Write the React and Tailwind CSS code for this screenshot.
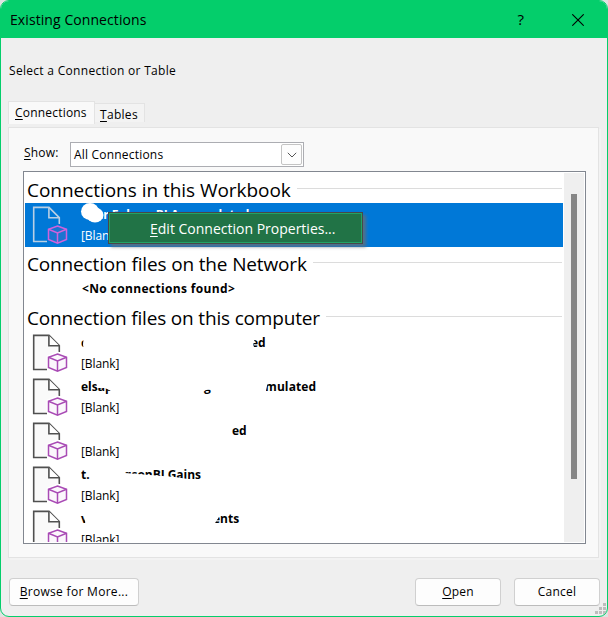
import React from "react";

function FileCube({ selected }) {
  const doc = selected ? "#b9cfe4" : "#505050";
  const cube = selected ? "#d062dc" : "#a94bb5";
  return (
    <svg className="block h-[38px] w-[36px] shrink-0" viewBox="0 0 36 38" fill="none">
      <path
        d="M15 35.5H1.7V1.4H17L27.3 11.7V18"
        stroke={doc}
        strokeWidth="1.6"
        fill={selected ? "none" : "#fafafa"}
      />
      <path d="M16.9 1.5V11.7H27.3" stroke={doc} strokeWidth="1.6" fill={selected ? "none" : "#fff"} />
      <path
        d="M25.5 19.3L34.5 23V33.2L25.5 37L16.3 33.2V23Z"
        stroke={selected ? "#0078d7" : "#fff"}
        strokeWidth="3.4"
        fill={selected ? "#0078d7" : "#fff"}
      />
      <path
        d="M25.5 20L34.5 23.3V33.5L25.5 37.2L16.5 33.5V23.3Z"
        stroke={cube}
        strokeWidth="1.5"
        fill={selected ? "#1b74d0" : "#fbf7fc"}
      />
      <path d="M16.5 23.3L25.5 27L34.5 23.3M25.5 27V37" stroke={cube} strokeWidth="1.5" />
    </svg>
  );
}

function Heading({ children, tracking }) {
  return (
    <div className="flex h-[30px] shrink-0 items-center pl-[2px] pr-[1px]">
      <span className={"whitespace-nowrap pt-[3px] text-[19px] leading-[30px] " + tracking}>{children}</span>
      <span className="ml-[6px] h-px flex-1 bg-[#dcdcdc]" />
    </div>
  );
}

function Row({ selected, title, mask }) {
  return (
    <div
      className={
        "relative flex h-[44px] shrink-0 pl-[7px] pt-[3px] " +
        (selected ? "bg-[#0078d7] text-white" : "")
      }
    >
      <FileCube selected={selected} />
      <div className="ml-[13px] flex flex-col pt-px text-[12px]">
        <div className="flex h-[16px] items-center whitespace-nowrap font-bold leading-[16px]">{title}</div>
        <div className="mt-[5px] h-[16px] leading-[16px] tracking-[-0.1px]">[Blank]</div>
      </div>
      <svg className="absolute left-0 top-0 h-[44px] w-[300px]" viewBox="0 0 300 44" fill="#fff">
        {mask}
      </svg>
    </div>
  );
}

function Button({ children, width }) {
  return (
    <button
      className={
        "flex h-[28px] items-center justify-center rounded-[4px] border border-[#d0d0d0] border-b-[#bcbcbc] bg-[#fdfdfd] text-[12px] " +
        width
      }
    >
      <span>{children}</span>
    </button>
  );
}

export default function App() {
  return (
    <div className="h-[617px] w-[608px] bg-[#dfe3e1]">
      <div className="relative flex h-[617px] w-[608px] flex-col overflow-hidden rounded-[9px] border border-[#04ce6b] bg-[#efefef] font-['Open_Sans','Noto_Sans',sans-serif] text-black">
        <header className="flex h-[37px] shrink-0 items-center bg-[#04ce6b] pl-[9px] pr-[23px]">
          <h1 className="text-[14px] leading-[20px] tracking-[0.08px]">Existing Connections</h1>
          <span className="ml-auto text-[15px]">?</span>
          <svg className="ml-[48px] h-[12px] w-[12px]" viewBox="0 0 12 12" stroke="#000" strokeWidth="1.1">
            <path d="M.3.3L11.7 11.7M11.7.3L.3 11.7" />
          </svg>
        </header>

        <p className="mt-[25px] h-[16px] shrink-0 pl-[8px] text-[12px] leading-[16px] tracking-[0.3px]">
          Select a Connection or Table
        </p>

        <div className="mt-[22px] flex h-[26px] shrink-0 items-start pl-[7px] text-[12px] tracking-[0.2px]">
          <div className="h-[23px] w-[87px] border border-b-0 border-[#e3e3e3] bg-[#f9f9f9] pl-[6px] leading-[22px]">
            <span className="underline underline-offset-2">C</span>onnections
          </div>
          <div className="mt-[2px] h-[19px] w-[50px] border border-b-0 border-l-0 border-[#e3e3e3] bg-[#f3f3f3] pl-[5px] leading-[22px] tracking-[0.3px]">
            <span className="underline underline-offset-2">T</span>ables
          </div>
        </div>

        <main className="ml-[7px] flex h-[431px] w-[591px] shrink-0 flex-col border border-[#e3e3e3] bg-[#f9f9f9] pl-[14px] pt-[14px] shadow-[2px_2px_0_#f3f3f3]">
          <div className="flex h-[25px] items-start text-[12px] tracking-[0.2px]">
            <span className="w-[47px] pl-px pt-[2px] leading-[18px]">
              <span className="underline underline-offset-2">S</span>how:
            </span>
            <div className="flex h-[25px] w-[234px] items-center border border-[#acadb2] bg-white pl-[3px] pr-[1px]">
              <span className="leading-[16px]">All Connections</span>
              <div className="ml-auto flex h-[21px] w-[21px] items-center justify-center rounded-[2px] border border-[#c4c4c4] bg-[#fdfdfd]">
                <svg className="h-[6px] w-[10px]" viewBox="0 0 10 6" fill="none" stroke="#555">
                  <path d="M.8.8L5 5L9.2.8" />
                </svg>
              </div>
            </div>
          </div>

          <div className="mt-[4px] flex h-[373px] w-[563px] border border-[#828790] bg-white p-[1px]">
            <div className="relative flex h-[369px] w-[538px] flex-col">
              <div className="flex h-[369px] flex-col overflow-hidden">
                <Heading tracking="tracking-[-0.04px]">Connections in this Workbook</Heading>
                <Row
                  selected
                  title={<span className="ml-[15px] tracking-[-0.05px]">ar Enkom BI Accumulated</span>}
                  mask={
                    <>
                      <ellipse cx="65" cy="8.5" rx="9" ry="8.5" />
                      <ellipse cx="70" cy="12" rx="8.5" ry="7.5" />
                    </>
                  }
                />
                <Heading tracking="tracking-[-0.15px]">Connection files on the Network</Heading>
                <div className="h-[24px] shrink-0 pl-[57px] pt-[4px] text-[12px] font-bold leading-[16px] tracking-[0.36px]">
                  &lt;No connections found&gt;
                </div>
                <Heading tracking="tracking-[-0.17px]">Connection files on this computer</Heading>
                <Row
                  title={
                    <>
                      <span className="w-[170px]">c</span>
                      <span>ed</span>
                    </>
                  }
                  mask={<path d="M59 2H229V9L230 11L228 13L230 19H59L58 14Z" />}
                />
                <Row
                  title={
                    <>
                      <span className="w-[123px]">elsap</span>
                      <span className="w-[61px]">g</span>
                      <span className="tracking-[0.1px]">mulated</span>
                    </>
                  }
                  mask={<path d="M71 2H244L240 20H187V14L176 16V23H92V16H86L80 13H72Z" />}
                />
                <Row title={<span className="ml-[151px]">ed</span>} />
                <Row
                  title={
                    <>
                      <span className="w-[28px]">t.</span>
                      <span className="tracking-[-0.05px]">andsonBI Gains</span>
                    </>
                  }
                  mask={
                    <>
                      <path d="M66 2H100V10L125 12L150 14L163 16V20H66Z" />
                      <path d="M101 2H126V9H101Z" />
                    </>
                  }
                />
                <Row
                  title={
                    <>
                      <span className="w-[132px]">v</span>
                      <span>ents</span>
                    </>
                  }
                  mask={<path d="M58 2H194V10L190 16V20H61L60 14Z" />}
                />
              </div>
              <div className="absolute left-[83px] top-[39px] flex h-[32px] w-[255px] border border-[#484848] bg-[#21a366] p-px shadow-[3px_3px_3px_rgba(110,110,110,0.75)]">
                <div className="flex flex-1 items-center bg-[#217346] pl-[40px] text-[14px] text-white">
                  <span className="whitespace-nowrap">
                    <span className="underline underline-offset-2">E</span>dit Connection Properties...
                  </span>
                </div>
              </div>
            </div>
            <div className="ml-[1px] w-[20px] bg-[#efefef] pl-[7px] pt-[21px]">
              <div className="h-[285px] w-[6px] bg-[#868686]" />
            </div>
          </div>
        </main>

        <footer className="mt-[20px] flex shrink-0 pl-[8px] pr-[7px]">
          <Button width="w-[130px] tracking-[0.3px]">
            <span className="underline underline-offset-2">B</span>rowse for More...
          </Button>
          <div className="ml-auto flex gap-[13px]">
            <Button width="w-[86px] tracking-[0.2px]">
              <span className="underline underline-offset-2">O</span>pen
            </Button>
            <Button width="w-[86px] tracking-[0.2px]">Cancel</Button>
          </div>
        </footer>

        <svg className="absolute bottom-[2px] right-[1px] h-[11px] w-[11px]" viewBox="0 0 11 11" fill="#bdbdbd">
          <path d="M8 0h3v3H8zM4 4h3v3H4zM8 4h3v3H8zM0 8h3v3H0zM4 8h3v3H4zM8 8h3v3H8z" />
        </svg>
      </div>
    </div>
  );
}
